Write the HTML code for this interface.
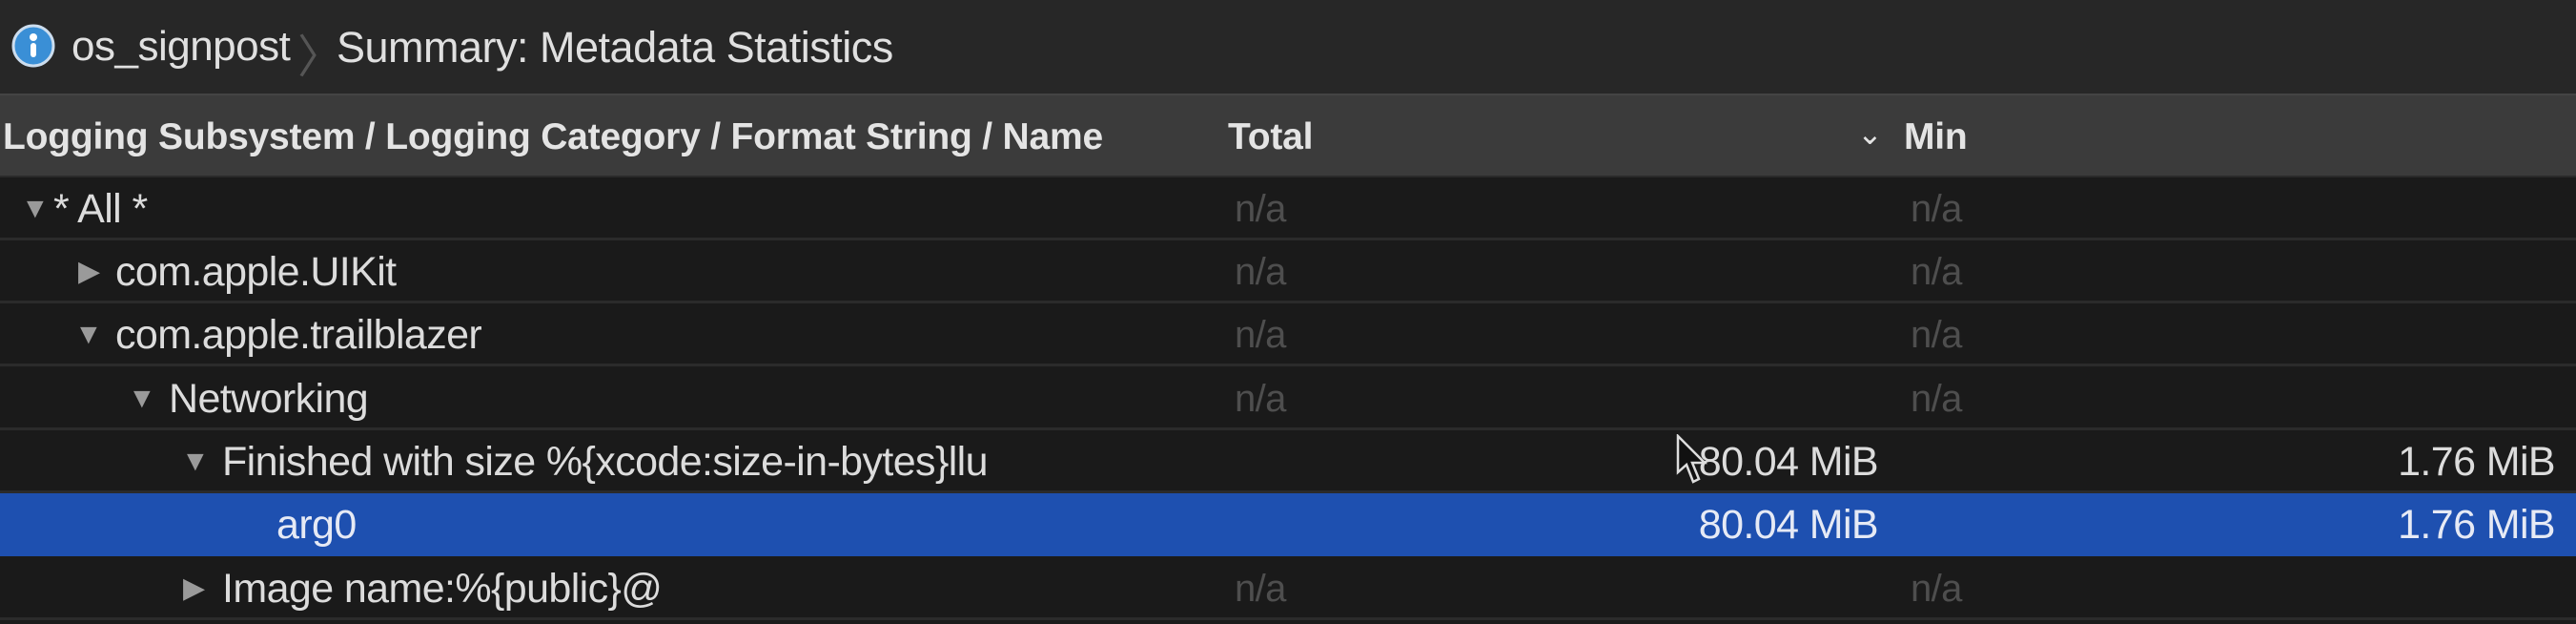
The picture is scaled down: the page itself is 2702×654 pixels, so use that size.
<!DOCTYPE html>
<html><head><style>
body{margin:0;width:2702px;height:654px;background:#1b1b1b;font-family:"Liberation Sans",sans-serif;overflow:hidden;position:relative;color:#dcdcdc}
.t{position:absolute;top:0;left:0;width:2702px;height:98px;background:#272727}
.h{position:absolute;top:98px;left:0;width:2702px;height:88px;background:#3b3b3b;border-top:2px solid #444;border-bottom:2px solid #2a2a2a;box-sizing:border-box}
.row{position:absolute;left:0;width:2702px;height:66px;border-bottom:3px solid #2b2b2b;box-sizing:border-box;background:#1a1a1a}
.row.sel{background:#1e50b0;border-bottom-color:#1e50b0}
.tx{position:absolute;font-size:43px;white-space:nowrap;line-height:66px;top:0;letter-spacing:-0.6px}
.na{color:#4e4e4e;font-size:40px}
.tri{position:absolute;top:0;line-height:66px;font-size:30px;color:#9a9a9a}
.r{text-align:right}
.hd{position:absolute;top:0;line-height:88px;font-size:39px;font-weight:bold;color:#e4e4e4;white-space:nowrap;letter-spacing:-0.2px}
</style></head><body>
<div class="t">
<svg style="position:absolute;left:12px;top:25px" width="46" height="46" viewBox="0 0 46 46"><circle cx="23" cy="23" r="21" fill="#3a8fd6" stroke="#cde" stroke-width="3"/><circle cx="23" cy="14" r="4" fill="#fff"/><rect x="20" y="20" width="6" height="15" rx="3" fill="#fff"/></svg>
<div style="position:absolute;left:75px;top:24px;font-size:44px;color:#e0e0e0;letter-spacing:-0.5px">os_signpost</div>
<div style="position:absolute;left:312px;top:20px;font-size:48px;color:#555">〉</div>
<div style="position:absolute;left:353px;top:24px;font-size:45px;color:#e0e0e0;letter-spacing:-0.5px">Summary: Metadata Statistics</div>
</div>
<div class="h">
<div class="hd" style="left:3px">Logging Subsystem / Logging Category / Format String / Name</div>
<div class="hd" style="left:1288px">Total</div>
<div class="hd" style="left:1948px;font-weight:normal;font-size:32px;line-height:80px">⌄</div>
<div class="hd" style="left:1997px">Min</div>
</div>

<div class="row" style="top:186px"><span class="tri" style="left:22px">▼</span><span class="tx" style="left:56px">* All *</span><span class="tx na" style="left:1295px">n/a</span><span class="tx na" style="left:2004px">n/a</span></div>
<div class="row" style="top:252px"><span class="tri" style="left:82px">▶</span><span class="tx" style="left:121px">com.apple.UIKit</span><span class="tx na" style="left:1295px">n/a</span><span class="tx na" style="left:2004px">n/a</span></div>
<div class="row" style="top:318px"><span class="tri" style="left:78px">▼</span><span class="tx" style="left:121px">com.apple.trailblazer</span><span class="tx na" style="left:1295px">n/a</span><span class="tx na" style="left:2004px">n/a</span></div>
<div class="row" style="top:385px"><span class="tri" style="left:134px">▼</span><span class="tx" style="left:177px">Networking</span><span class="tx na" style="left:1295px">n/a</span><span class="tx na" style="left:2004px">n/a</span></div>
<div class="row" style="top:451px"><span class="tri" style="left:190px">▼</span><span class="tx" style="left:233px">Finished with size %{xcode:size-in-bytes}llu</span><span class="tx r" style="right:732px">80.04 MiB</span><span class="tx r" style="right:22px">1.76 MiB</span>
<svg style="position:absolute;left:1758px;top:4px" width="34" height="58" viewBox="0 0 34 58"><path d="M2 2 L2 40 L11 32 L18 50 L24 47 L17 30 L30 30 Z" fill="#111" stroke="#ddd" stroke-width="2.5"/></svg></div>
<div class="row sel" style="top:517px"><span class="tx" style="left:290px;color:#e6eaf5">arg0</span><span class="tx r" style="right:732px;color:#e6eaf5">80.04 MiB</span><span class="tx r" style="right:22px;color:#e6eaf5">1.76 MiB</span></div>
<div class="row" style="top:584px"><span class="tri" style="left:192px">▶</span><span class="tx" style="left:233px">Image name:%{public}@</span><span class="tx na" style="left:1295px">n/a</span><span class="tx na" style="left:2004px">n/a</span></div>
</body></html>
